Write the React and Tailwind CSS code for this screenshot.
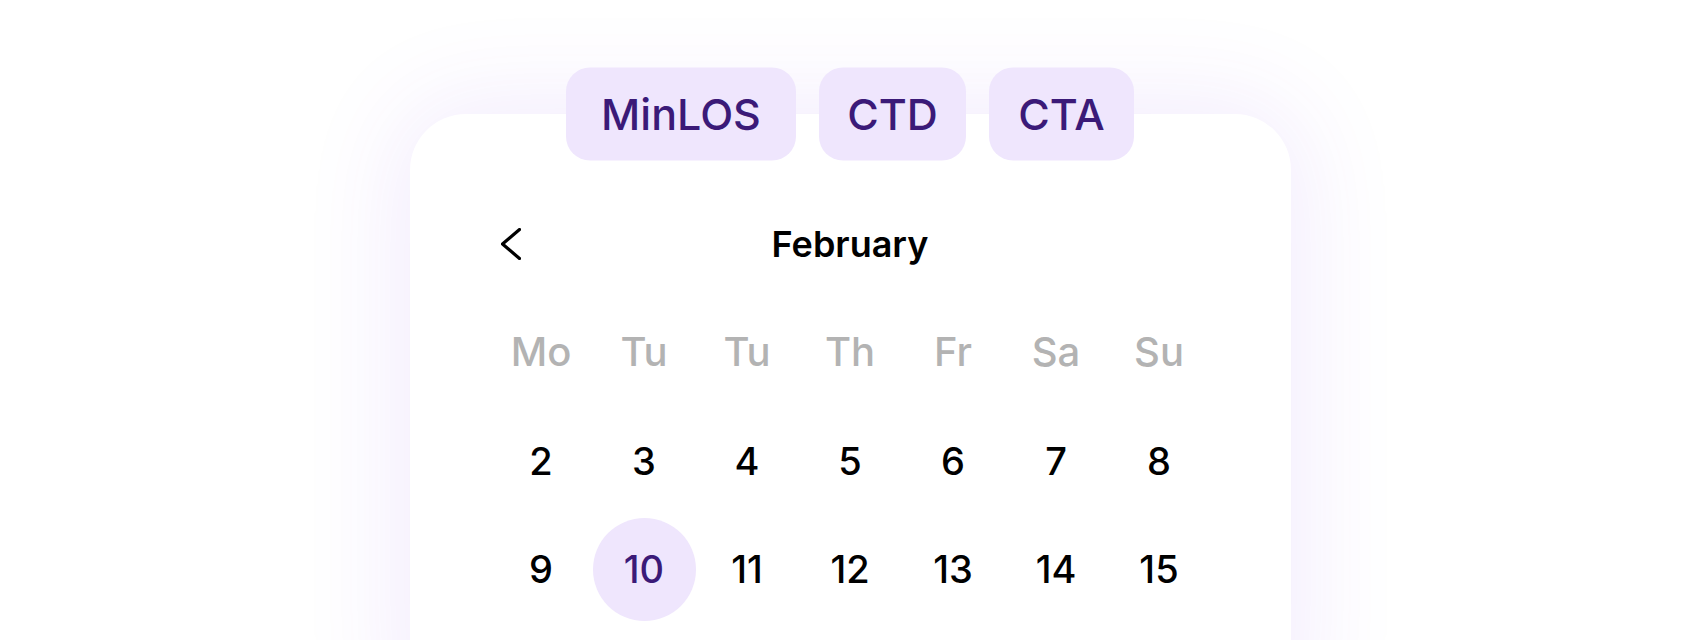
import { useState } from "react"

const weekdays = ["Mo", "Tu", "Tu", "Th", "Fr", "Sa", "Su"]

const weeks = [
  [2, 3, 4, 5, 6, 7, 8],
  [9, 10, 11, 12, 13, 14, 15],
]

const tabs = [
  { label: "MinLOS", width: "w-[230px]" },
  { label: "CTD", width: "w-[147px]" },
  { label: "CTA", width: "w-[145px]" },
]

const App = () => {
  const [selected, setSelected] = useState(10)

  return (
    <div
      className="w-full h-[640px] overflow-hidden bg-white flex justify-center pt-[114px]"
      style={{ fontFamily: "Inter, 'Noto Sans', sans-serif" }}
    >
      <div className="relative w-[881px] h-[620px] shrink-0 self-start bg-white rounded-[56px] shadow-[0_0_100px_10px_rgba(124,58,237,0.1)] px-[80px] pt-[100px]">
        {/* Restriction tabs */}
        <div className="absolute left-0 right-0 top-0 -translate-y-1/2 flex justify-center gap-[23px]">
          {tabs.map((tab) => (
            <button
              key={tab.label}
              className={`${tab.width} h-[93px] rounded-[24px] bg-[#efe6fd] text-[#3b1a78] text-[43px] font-medium leading-none flex items-center justify-center`}
            >
              {tab.label}
            </button>
          ))}
        </div>

        {/* Month header */}
        <div className="grid grid-cols-[1fr_auto_1fr] items-center h-[60px]">
          <button className="justify-self-start ml-[11px] text-black">
            <svg width="20" height="32" viewBox="0 0 20 32" fill="none">
              <path
                d="M18.5 1.5 L1.5 16 L18.5 30.5"
                stroke="currentColor"
                strokeWidth="3.2"
                strokeLinecap="round"
                strokeLinejoin="round"
              />
            </svg>
          </button>
          <h2 className="text-[36px] font-semibold text-black leading-none">February</h2>
          <div />
        </div>

        {/* Weekdays */}
        <div className="grid grid-cols-7 mt-[26px]">
          {weekdays.map((d, i) => (
            <div key={i} className="h-[103px] flex items-center justify-center text-[40px] font-medium text-[#b3b3b3]">
              {d}
            </div>
          ))}
        </div>

        {/* Days */}
        <div className="flex flex-col gap-[5px] mt-[7px]">
          {weeks.map((week, w) => (
            <div key={w} className="grid grid-cols-7">
              {week.map((day) => (
                <div key={day} className="h-[103px] flex items-center justify-center">
                  <button
                    onClick={() => setSelected(day)}
                    className={`w-[103px] h-[103px] rounded-full flex items-center justify-center text-[38px] font-medium ${
                      selected === day ? "bg-[#efe6fd] text-[#3b1a78]" : "text-black"
                    }`}
                  >
                    {day}
                  </button>
                </div>
              ))}
            </div>
          ))}
        </div>
      </div>
    </div>
  )
}

export default App
